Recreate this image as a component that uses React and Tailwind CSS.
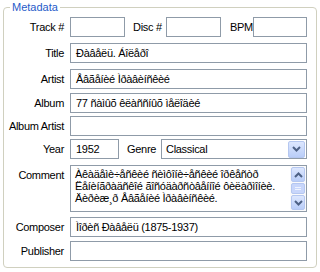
import React from "react";

const font = { fontFamily: '"Liberation Sans", Arial, sans-serif' };

function Chevron({ up }) {
  return (
    <svg width="9" height="6" viewBox="0 0 9 6">
      <path
        d={up ? "M1 5 L4.5 1.5 L8 5" : "M1 1 L4.5 4.5 L8 1"}
        fill="none"
        stroke="#4d6185"
        strokeWidth="2"
      />
    </svg>
  );
}

function XPButton({ up, className = "" }) {
  return (
    <div
      className={
        "flex items-center justify-center rounded-[2px] border border-[#b5c7f0] bg-gradient-to-b from-[#dde7fe] to-[#b9cdf8] " +
        className
      }
    >
      <Chevron up={up} />
    </div>
  );
}

function Input({ className = "", children }) {
  return (
    <div
      className={
        "flex h-[20px] items-center border border-[#8f9ba8] bg-white px-[5px] whitespace-nowrap overflow-hidden " +
        className
      }
    >
      {children}
    </div>
  );
}

function Label({ children }) {
  return <div className="w-[66px] shrink-0 text-right pr-[6px] whitespace-nowrap">{children}</div>;
}

export default function App() {
  return (
    <div
      className="w-[320px] h-[272px] bg-white text-[11px] tracking-[-0.3px] text-black leading-[13px] pl-[3px] pt-[1px]"
      style={font}
    >
      <fieldset className="w-[314px] h-[267px] border border-[#d0d0bf] rounded-[4px] m-0 p-0">
        <legend className="ml-[6px] px-[2px] text-[#1f5bc9] text-[11px] tracking-normal">Metadata</legend>
        <div className="flex flex-col pt-[3px]">
          <div className="flex items-center">
            <Label>Track #</Label>
            <Input className="w-[55px]" />
            <div className="ml-[8px] w-[33px] whitespace-nowrap">Disc #</div>
            <Input className="w-[55px]" />
            <div className="ml-[9px] w-[23px] whitespace-nowrap">BPM</div>
            <Input className="w-[54px]" />
          </div>
          <div className="flex items-center mt-[6px]">
            <Label>Title</Label>
            <Input className="w-[237px]">Ðàâåëü. Áîëåðî</Input>
          </div>
          <div className="flex items-center mt-[6px]">
            <Label>Artist</Label>
            <Input className="w-[237px]">Åâãåíèé Ìðàâèíñêèé</Input>
          </div>
          <div className="flex items-center mt-[4px]">
            <Label>Album</Label>
            <Input className="w-[237px]">77 ñàìûõ êëàññíûõ ìåëîäèé</Input>
          </div>
          <div className="flex items-center mt-[3px]">
            <Label>Album Artist</Label>
            <Input className="w-[237px]" />
          </div>
          <div className="flex items-center mt-[3px]">
            <Label>Year</Label>
            <Input className="w-[49px]">1952</Input>
            <div className="ml-[8px] w-[34px] whitespace-nowrap">Genre</div>
            <div className="flex h-[20px] w-[146px] items-center border border-[#8f9ba8] bg-white pl-[4px] pr-[1px]">
              <div className="flex-1">Classical</div>
              <XPButton className="w-[17px] h-[17px]" />
            </div>
          </div>
          <div className="flex items-start mt-[6px]">
            <div className="w-[66px] shrink-0 text-right pr-[6px] pt-[4px]">Comment</div>
            <div className="flex h-[47px] w-[237px] border border-[#8f9ba8] bg-white">
              <div className="flex-1 pl-[4px] pt-[2px] leading-[12px] overflow-hidden whitespace-nowrap">
                <div>Àêàäåìè÷åñêèé ñèìôîíè÷åñêèé îðêåñòð</div>
                <div>Ëåíèíãðàäñêîé ãîñóäàðñòâåííîé ôèëàðìîíèè.</div>
                <div>Äèðèæ¸ð Åâãåíèé Ìðàâèíñêèé.</div>
              </div>
              <div className="flex w-[16px] flex-col items-center p-[1px] bg-[#fafafb]">
                <XPButton up className="w-[14px] h-[15px]" />
                <div className="mt-[1px] flex h-[11px] w-[14px] flex-col items-center justify-center gap-[1px] rounded-[2px] border border-[#b5c7f0] bg-[#c8d6fb]">
                  <div className="h-[1px] w-[6px] bg-[#eef3ff]" />
                  <div className="h-[1px] w-[6px] bg-[#eef3ff]" />
                </div>
                <div className="flex-1" />
                <XPButton className="w-[14px] h-[15px]" />
              </div>
            </div>
          </div>
          <div className="flex items-center mt-[5px]">
            <Label>Composer</Label>
            <Input className="w-[237px]">Ìîðèñ Ðàâåëü (1875-1937)</Input>
          </div>
          <div className="flex items-center mt-[4px]">
            <Label>Publisher</Label>
            <Input className="w-[237px]" />
          </div>
        </div>
      </fieldset>
    </div>
  );
}
